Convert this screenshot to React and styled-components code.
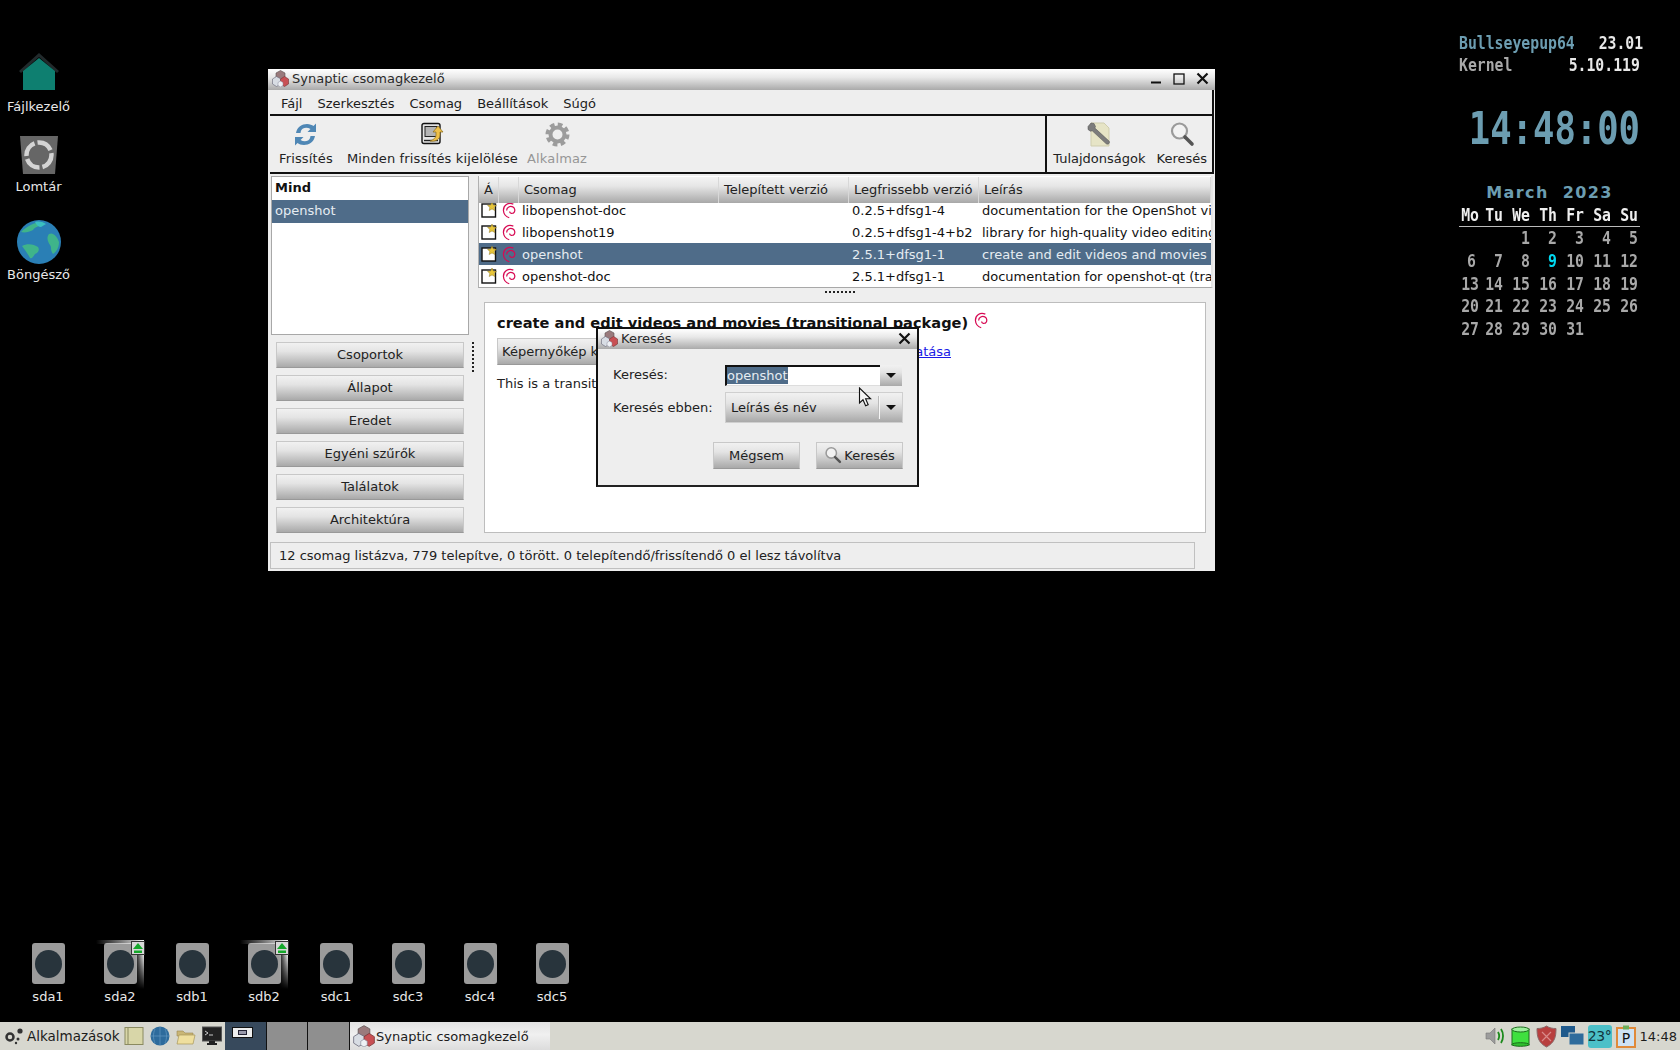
import React from "react";
import styled, { createGlobalStyle } from "styled-components";

const GlobalStyle = createGlobalStyle`
  html, body { margin: 0; padding: 0; background: #000; overflow: hidden; }
  body { font-family: "DejaVu Sans", sans-serif; font-size: 13px; color: #1c1c1c; }
  * { box-sizing: border-box; }
`;

const SELECT = "#4f6c89";
const BTN_GRAD = "linear-gradient(#f1f1f1 0%, #e4e4e4 35%, #a9a9a9 100%)";

const Page = styled.div`
  width: 1680px;
  height: 1050px;
  display: flex;
  flex-direction: column;
`;

const Desktop = styled.div`
  position: relative;
  flex: 1;
  background: #000;
`;

/* desktop icons */
const DeskIcon = styled.div`
  position: absolute;
  left: 0;
  top: ${(p) => p.$top}px;
  width: 77px;
  display: flex;
  flex-direction: column;
  align-items: center;
  color: #e8e8e8;
`;

const DeskLabel = styled.div`
  height: 16px;
  line-height: 16px;
  margin-top: ${(p) => p.$gap}px;
`;

const DriveRow = styled.div`
  position: absolute;
  left: 12px;
  top: 941px;
  display: flex;
`;

const Drive = styled.div`
  position: relative;
  width: 72px;
  height: 64px;
  display: flex;
  flex-direction: column;
  align-items: center;
  padding-top: 2px;
  color: #e8e8e8;
`;

const DriveBody = styled.div`
  width: 33px;
  height: 42px;
  border-radius: 3px;
  background: #9b9b9b;
  display: flex;
  align-items: center;
  justify-content: center;
`;

const DriveHole = styled.div`
  width: 27px;
  height: 28px;
  border-radius: 50%;
  background: #28343c;
`;

const DriveLabel = styled.div`
  margin-top: 5px;
  line-height: 16px;
`;

const MountGlow = styled.div`
  position: absolute;
  left: 12px;
  top: -1px;
  width: 48px;
  height: 49px;

  &::before {
    content: "";
    position: absolute;
    left: 0;
    top: 0;
    width: 100%;
    height: 4px;
    background: linear-gradient(to right, transparent, #e8e8e8);
  }

  &::after {
    content: "";
    position: absolute;
    right: 0;
    top: 0;
    width: 9px;
    height: 100%;
    background: linear-gradient(to right, transparent, #f0f0f0);
    mask-image: linear-gradient(#000 30%, transparent);
  }
`;

const EjectBadge = styled.div`
  position: absolute;
  left: 47px;
  top: 0;
  width: 14px;
  height: 14px;
  background: #d8d8d8;
  border: 1px solid #333;
  display: flex;
`;

/* conky */
const Conky = styled.div`
  position: absolute;
  left: 1459px;
  top: 32px;
  width: 181px;
  font-family: "DejaVu Sans Mono", monospace;
  font-weight: bold;
  font-size: 17px;
`;

const ConkyLine = styled.div`
  height: 22px;
  line-height: 22px;
  display: flex;
  justify-content: space-between;
`;

const ConkyKey = styled.span`
  color: ${(p) => p.$color};
  transform: scaleX(0.87);
  transform-origin: left;
`;

const ConkyValue = styled.span`
  color: #e8e8e8;
  transform: scaleX(0.87);
  transform-origin: right;
`;

const Clock = styled.div`
  margin-top: 31px;
  height: 44px;
  line-height: 44px;
  font-size: 45px;
  display: flex;
  justify-content: flex-end;
  color: #6c9db1;
  transform: scaleX(0.79);
  transform-origin: right;
  white-space: nowrap;
`;

const MonthTitle = styled.div`
  margin-top: 31px;
  height: 22px;
  line-height: 22px;
  text-align: center;
  font-family: "DejaVu Sans", sans-serif;
  font-size: 16px;
  letter-spacing: 1.4px;
  white-space: pre;
  color: #6c9db1;
`;

const CalGrid = styled.div`
  display: grid;
  grid-template-columns: 17px repeat(6, 27px);
  grid-auto-rows: 22.8px;
  line-height: 22px;
`;

const CalHead = styled.div`
  display: grid;
  grid-template-columns: 17px repeat(6, 27px);
  height: 23px;
  line-height: 22px;
  border-bottom: 1px solid #bbb;
`;

const CalCell = styled.div`
  text-align: right;
  white-space: nowrap;
  color: ${(p) => p.$color};
  transform: scaleX(0.87);
  transform-origin: right;
`;

/* main window */
const Window = styled.div`
  position: absolute;
  left: 268px;
  top: 69px;
  width: 947px;
  height: 502px;
  background: #eeeeee;
  display: flex;
  flex-direction: column;
`;

const TitleBar = styled.div`
  height: ${(p) => p.$h}px;
  flex: none;
  display: flex;
  align-items: center;
  background: linear-gradient(#ffffff, #e8e8e8 40%, #aaaaaa);
  padding-left: ${(p) => p.$pad}px;
  padding-bottom: 2px;
  gap: 3px;
  color: #2a2a2a;
  white-space: nowrap;
`;

const TitleText = styled.span`
  flex: 1;
`;

const WinControls = styled.div`
  display: flex;
  align-items: center;
  margin-right: ${(p) => p.$right}px;
  gap: 11px;
`;

const MenuBar = styled.div`
  height: 26px;
  flex: none;
  display: flex;
  align-items: center;
  gap: 15px;
  padding-left: 11px;
  padding-top: 2px;
  margin: 0 1px 0 2px;
  border-bottom: 2px solid #111;
  border-right: 2px solid #111;
`;

const Toolbar = styled.div`
  height: 58px;
  flex: none;
  display: flex;
  margin: 0 1px 0 2px;
  border-bottom: 2px solid #111;
  border-right: 2px solid #111;
`;

const ToolGroup = styled.div`
  display: flex;
  flex: ${(p) => (p.$grow ? 1 : "none")};
  padding-left: ${(p) => p.$pad}px;
  gap: ${(p) => (p.$grow ? 4 : 1)}px;
  letter-spacing: ${(p) => (p.$grow ? 0.15 : 0)}px;
  border-left: ${(p) => (p.$split ? "2px solid #111" : "none")};
`;

const ToolItem = styled.div`
  display: flex;
  flex-direction: column;
  align-items: center;
  padding: 5px 5px 0;
  margin-left: ${(p) => p.$shift || 0}px;
  color: ${(p) => (p.$off ? "#969696" : "#222")};
  white-space: nowrap;
`;

const ToolIcon = styled.div`
  height: 26px;
  display: flex;
  align-items: center;
  justify-content: center;
`;

const ToolText = styled.div`
  margin-top: 4px;
  line-height: 16px;
`;

const Panes = styled.div`
  flex: none;
  height: 364px;
  display: flex;
  padding: 2px 2px 0 3px;
`;

const LeftPane = styled.div`
  width: 198px;
  flex: none;
  display: flex;
  flex-direction: column;
`;

const FilterList = styled.div`
  height: 159px;
  flex: none;
  background: #fff;
  border: 1px solid #a8a8a8;
`;

const FilterItem = styled.div`
  height: ${(p) => p.$h}px;
  line-height: ${(p) => p.$h - 2}px;
  padding-left: 3px;
  font-weight: ${(p) => (p.$bold ? "bold" : "normal")};
  background: ${(p) => (p.$active ? SELECT : "transparent")};
  color: ${(p) => (p.$active ? "#e6ecf2" : "#111")};
`;

const FilterButtons = styled.div`
  display: flex;
  flex-direction: column;
  gap: 7px;
  margin: 7px 5px 0 5px;
`;

const GradButton = styled.div`
  height: ${(p) => p.$h || 26}px;
  width: ${(p) => (p.$w ? `${p.$w}px` : "auto")};
  display: flex;
  align-items: center;
  justify-content: center;
  gap: 2px;
  padding: 0 4px 1px;
  background: ${BTN_GRAD};
  border: 1px solid #c8c8c8;
  border-bottom-color: #999;
  color: #222;
  flex: none;
  white-space: nowrap;
`;

const VDivider = styled.div`
  width: 9px;
  flex: none;
  display: flex;
  justify-content: center;
  padding-top: 166px;
`;

const DotsV = styled.div`
  width: 2px;
  height: 32px;
  background: repeating-linear-gradient(#222 0 2px, transparent 2px 4px);
  margin-left: -1px;
`;

const RightPane = styled.div`
  flex: 1;
  min-width: 0;
  display: flex;
  flex-direction: column;
`;

const Table = styled.div`
  height: 112px;
  flex: none;
  background: #fff;
  border-left: 1px solid #b0b0b0;
  border-bottom: 1px solid #a8a8a8;
  border-right: 2px solid #e4e4e4;
  padding-top: 1px;
  overflow: hidden;
`;

const TableHead = styled.div`
  position: relative;
  z-index: 1;
  height: 26px;
  display: grid;
  grid-template-columns: 20px 20px 200px 130px 130px 1fr;
  background: #eee;
`;

const HeadCell = styled.div`
  background: linear-gradient(#f4f4f4, #e6e6e6 35%, #a8a8a8);
  border-right: 1px solid #d8d8d8;
  padding-left: 5px;
  line-height: 26px;
  color: #222;
  white-space: nowrap;
  overflow: hidden;
`;

const Row = styled.div`
  height: 22px;
  display: grid;
  grid-template-columns: 20px 20px 200px 130px 130px 1fr;
  align-items: center;
  margin-top: ${(p) => (p.$first ? -4 : 0)}px;
  background: ${(p) => (p.$active ? SELECT : "#fff")};
  color: ${(p) => (p.$active ? "#e6ecf2" : "#111")};
`;

const RowText = styled.div`
  padding-left: ${(p) => p.$pad}px;
  white-space: nowrap;
  overflow: hidden;
`;

const RowIcon = styled.div`
  display: flex;
  justify-content: center;
  padding-left: ${(p) => p.$nudge || 0}px;
`;

const HDivider = styled.div`
  height: 14px;
  flex: none;
  display: flex;
  justify-content: center;
  padding-top: 3px;
`;

const DotsH = styled.div`
  width: 32px;
  height: 2px;
  background: repeating-linear-gradient(to right, #222 0 2px, transparent 2px 4px);
  margin-right: 10px;
`;

const Details = styled.div`
  height: 231px;
  flex: none;
  margin: 0 7px 0 6px;
  background: #fff;
  border: 1px solid #bdbdbd;
  padding: 12px 12px;
  color: #222;
`;

const DetailTitle = styled.div`
  display: flex;
  align-items: flex-start;
  gap: 6px;
  height: 16px;
  font-weight: bold;
  font-size: 14.6px;
  line-height: 16px;
  color: #111;
  white-space: nowrap;
`;

const TitleSwirl = styled.div`
  margin-top: -3px;
`;

const LinkRow = styled.div`
  margin-top: 7px;
  display: flex;
  align-items: center;
  justify-content: space-between;
  width: 454px;
  height: 27px;
`;

const DetailLink = styled.a`
  color: #1a1ae6;
  text-decoration: underline;
  white-space: nowrap;
`;

const DetailText = styled.div`
  margin-top: 10px;
  line-height: 18px;
`;

const StatusBar = styled.div`
  flex: none;
  margin: 4px 0 0 2px;
  height: 27px;
  width: 925px;
  border: 1px solid #c0c0c0;
  line-height: 25px;
  padding-left: 8px;
  color: #222;
  white-space: nowrap;
`;

/* search dialog */
const Dialog = styled.div`
  position: absolute;
  left: 596px;
  top: 327px;
  width: 323px;
  height: 160px;
  background: #eeeeee;
  border: 2px solid #111;
  border-bottom-color: #222;
  display: flex;
  flex-direction: column;
`;

const DialogBody = styled.div`
  flex: 1;
  padding: 16px 14px 0 15px;
  display: flex;
  flex-direction: column;
`;

const FormRow = styled.div`
  display: flex;
  align-items: center;
  height: ${(p) => p.$h}px;
  margin-bottom: 6px;
`;

const FormLabel = styled.div`
  width: 112px;
  flex: none;
  padding-bottom: ${(p) => (p.$up ? 2 : 0)}px;
  white-space: nowrap;
  color: #222;
`;

const Entry = styled.div`
  width: 155px;
  height: 21px;
  flex: none;
  background: #fff;
  border-top: 2px solid #111;
  border-left: 2px solid #111;
  border-bottom: 1px solid #ddd;
  line-height: 17px;
`;

const EntrySelection = styled.span`
  display: inline-block;
  background: ${SELECT};
  color: #e6ecf2;
`;

const ArrowButton = styled.div`
  width: 22px;
  height: 21px;
  flex: none;
  background: ${BTN_GRAD};
  display: flex;
  align-items: center;
  justify-content: center;
`;

const Arrow = styled.div`
  width: 0;
  height: 0;
  border-left: 5px solid transparent;
  border-right: 5px solid transparent;
  border-top: 5px solid #111;
`;

const ComboBox = styled.div`
  width: 178px;
  height: 31px;
  flex: none;
  background: ${BTN_GRAD};
  border: 1px solid #cfcfcf;
  display: flex;
  align-items: center;
  padding: 0 6px 0 5px;
`;

const ComboText = styled.div`
  flex: 1;
`;

const ComboSep = styled.div`
  width: 2px;
  height: 23px;
  background: #f6f6f6;
  border-left: 1px solid #bbb;
  margin-right: 6px;
`;

const DialogActions = styled.div`
  display: flex;
  justify-content: flex-end;
  gap: 16px;
  margin-top: 13px;
`;

const Pointer = styled.svg`
  position: absolute;
  left: 858px;
  top: 387px;
`;

/* panel */
const Taskbar = styled.div`
  height: 28px;
  flex: none;
  background: #d7d7cf;
  display: flex;
  align-items: center;
  white-space: nowrap;
  color: #1c1c1c;
`;

const StartButton = styled.div`
  display: flex;
  align-items: center;
  gap: 2px;
  padding-left: 4px;
  width: 122px;
  font-size: 13.5px;
`;

const Launchers = styled.div`
  display: flex;
  align-items: center;
  gap: 6px;
  padding-left: 2px;
  width: 103px;
`;

const PagerCell = styled.div`
  width: ${(p) => p.$w}px;
  height: 28px;
  flex: none;
  background: ${(p) => p.$bg};
  border-right: 1px solid #111;
  display: flex;
  padding: 5px 0 0 7px;
`;

const MiniWindow = styled.div`
  width: 21px;
  height: 11px;
  background: #eee;
  border: 1px solid #111;
  display: flex;
  align-items: center;
  justify-content: center;
`;

const MiniInner = styled.div`
  width: 9px;
  height: 5px;
  border: 1px solid #223;
  background: #99a;
`;

const TaskButton = styled.div`
  width: 200px;
  height: 28px;
  flex: none;
  display: flex;
  align-items: center;
  gap: 1px;
  padding-left: 3px;
  background: linear-gradient(#e2e2e2, #f0f0f0 45%, #dcdcdc);
`;

const Tray = styled.div`
  margin-left: auto;
  display: flex;
  align-items: center;
  gap: 4px;
  padding-right: 3px;
`;

const Weather = styled.div`
  width: 24px;
  height: 23px;
  border-radius: 3px;
  background: #4cc0c8;
  color: #12343c;
  font-size: 14px;
  line-height: 23px;
  text-align: center;
  letter-spacing: -0.5px;
`;

/* drawings */
const Swirl = ({ size = 16 }) => (
  <svg width={size * 0.85} height={size} viewBox="0 0 14 16" fill="none" stroke="#d70a53" strokeWidth="1.2">
    <path d="M11 1.800C6 -.5 1.200 3 1.400 8c.2 3.400 2.400 6 5.600 7" />
    <path d="M4.500 8C4.500 4.500 8 3.500 10.500 4.500c2.500 1.200 2.500 5 .5 6-1.500 .8-3.500 .2-3.600-1.500" />
  </svg>
);

const PackageMark = () => (
  <svg width="17" height="16" viewBox="0 0 17 16">
    <rect x="1" y="2" width="13.500" height="13" fill="#fff" stroke="#111" strokeWidth="1.400" />
    <polygon points="11,0 12.300,3 15.500,3.300 13.100,5.400 13.800,8.500 11,6.900 8.200,8.500 8.900,5.400 6.500,3.300 9.700,3" fill="#e8c63a" stroke="#8a7420" strokeWidth=".5" />
  </svg>
);

const SynapticIcon = ({ size = 17 }) => (
  <svg width={size} height={size} viewBox="0 0 17 17">
    <polygon points="8.500,0.500 13,3 13,7.500 8.500,10 4,7.500 4,3" fill="#9a7a7c" stroke="#5a5050" strokeWidth=".6" />
    <polygon points="4.500,6.500 9,9 9,14 4.500,16.500 0.500,14 0.500,9" fill="#d8dde4" stroke="#667" strokeWidth=".6" />
    <polygon points="12.500,6.500 16.500,9 16.500,14 12.500,16.500 8.500,14 8.500,9" fill="#c85054" stroke="#733" strokeWidth=".6" />
    <polygon points="8.500,11 11,12.500 11,15.500 8.500,17 6,15.500 6,12.500" fill="#eef1f5" stroke="#889" strokeWidth=".5" />
  </svg>
);

const RefreshIcon = () => (
  <svg width="25" height="25" viewBox="0 0 25 25" fill="#4f87b5">
    <path d="M3 11C4 5 9 2 14 2c3 0 5 1 6.500 2L23 1.500V10h-8.500l3-3C15 5.500 12 5.500 10 6.500 8.500 7.200 7.800 9 7.500 11z" />
    <path d="M22 14c-1 6-6 9-11 9-3 0-5-1-6.500-2L2 23.500V15h8.500l-3 3c2.500 1.500 5.500 1.500 7.500.5 1.500-.7 2.200-2.500 2.500-4.500z" />
  </svg>
);

const SelectAllIcon = () => (
  <svg width="24" height="24" viewBox="0 0 24 24">
    <rect x="2" y="1.500" width="18" height="20" rx="2" fill="#e4e4e4" stroke="#111" strokeWidth="1.400" />
    <rect x="5" y="4.500" width="12" height="10" fill="#b4b4b4" stroke="#222" />
    <path d="M4 18.500h14" stroke="#222" strokeWidth="1.400" />
    <path d="M18 4l5 6h-3v3c0 4-4 7-10 6 3-1 6-3 6-6v-3h-3z" fill="#eec04a" stroke="#8a6a18" strokeWidth=".7" />
  </svg>
);

const GearIcon = () => (
  <svg width="25" height="25" viewBox="0 0 25 25" fill="none" stroke="#9c9c9c">
    <circle cx="12.500" cy="12.500" r="7" strokeWidth="4" />
    <circle cx="12.500" cy="12.500" r="10" strokeWidth="4" strokeDasharray="4.600 3.250" />
  </svg>
);

const WrenchIcon = () => (
  <svg width="26" height="26" viewBox="0 0 26 26">
    <path d="M5 2h13l5 5v18H5z" fill="#e6e4c6" stroke="#cfcdae" />
    <path d="M2 5.500L5 2l3 .5 1.500 3-.6 1.600L23 20c.9 1 .5 2.600-.8 3.100-.9.3-1.700 0-2.200-.5L6.200 9.800l-1.800.4L2 8.500z" fill="#7c7c7c" stroke="#4c4c4c" strokeWidth=".5" />
  </svg>
);

const SearchIcon = ({ size = 26 }) => (
  <svg width={size} height={size} viewBox="0 0 26 26" fill="none">
    <circle cx="10.500" cy="10" r="7.500" fill="#f2f2f2" stroke="#9a9a9a" strokeWidth="2.200" />
    <path d="M16 16l7 7" stroke="#555" strokeWidth="3.600" strokeLinecap="round" />
  </svg>
);

const HomeIcon = () => (
  <svg width="44" height="40" viewBox="0 0 44 40">
    <path d="M22 1L2 19l2 2L22 5l18 16 2-2z" fill="#222a2c" />
    <path d="M6 19L22 6l16 13v19H6z" fill="#0e7f70" />
  </svg>
);

const TrashIcon = () => (
  <svg width="40" height="40" viewBox="0 0 40 40" fill="none">
    <path d="M1 1h38l-3 38H4z" fill="#666" />
    <circle cx="20" cy="20" r="12.500" stroke="#d4d4d4" strokeWidth="4.500" strokeDasharray="16 3" />
  </svg>
);

const GlobeIcon = () => (
  <svg width="44" height="44" viewBox="0 0 44 44">
    <circle cx="22" cy="22" r="22" fill="#2a7fb5" />
    <path d="M4 12c6-6 14-10 22-10-2 5-8 4-10 8-4 2-8 3-12 2zM32 14c4-2 8 2 10 8 0 6-3 10-6 12-3-4-1-6-3-9-2-3-4-7-1-11zM5 26c5-3 12-2 16 1 2 3 0 6-3 7-2 3-3 5-5 4-2-4-5-8-8-12z" fill="#3fb48a" />
    <path d="M18 2c4-1 8 0 11 2l-5 3c-2 0-5-2-6-5z" fill="#3ac0c0" />
  </svg>
);

const EjectIcon = () => (
  <svg width="12" height="12" viewBox="0 0 12 12">
    <path d="M6 1l5 6H1z" fill="#14a82a" />
    <rect x="2" y="8.500" width="8" height="2.500" fill="#14a82a" />
  </svg>
);

const AppsIcon = () => (
  <svg width="21" height="20" viewBox="0 0 21 20">
    <circle cx="6" cy="11" r="3.500" fill="none" stroke="#333" strokeWidth="2.500" />
    <circle cx="16" cy="5" r="2.600" fill="#333" />
    <circle cx="14" cy="13" r="1.500" fill="#333" />
    <circle cx="12" cy="17" r="1.200" fill="#333" />
  </svg>
);

const NotebookIcon = () => (
  <svg width="20" height="20" viewBox="0 0 20 20">
    <rect x="1" y="1.500" width="18" height="17" fill="#d8d6a8" stroke="#8a8a60" />
    <path d="M4 2v16" stroke="#8a8a60" />
  </svg>
);

const BlueGlobe = () => (
  <svg width="20" height="20" viewBox="0 0 20 20">
    <circle cx="10" cy="10" r="9.500" fill="#2d6b9c" />
    <path d="M1 10h18M10 1v18M5 3c-2 4-2 10 0 14M15 3c2 4 2 10 0 14" stroke="#5c93bd" fill="none" strokeWidth=".8" />
  </svg>
);

const FolderIcon = () => (
  <svg width="20" height="20" viewBox="0 0 20 20">
    <path d="M1 5h6l2 2h8v3H1z" fill="#c9b676" stroke="#9a8850" strokeWidth=".6" />
    <path d="M1 18l2-9h16l-2 9z" fill="#efdf9e" stroke="#a8965a" strokeWidth=".7" />
  </svg>
);

const TerminalIcon = () => (
  <svg width="20" height="20" viewBox="0 0 20 20">
    <rect x="0.500" y="1" width="19" height="14" fill="#222" stroke="#555" />
    <path d="M3 5l3 2-3 2M7 9h4" stroke="#ddd" fill="none" strokeWidth=".9" />
    <path d="M7 15h6v2h2v2H5v-2h2z" fill="#222" />
  </svg>
);

const SpeakerIcon = () => (
  <svg width="22" height="20" viewBox="0 0 22 20" fill="none">
    <path d="M1 7h4l5-5v16l-5-5H1z" fill="#9c9c9c" stroke="#777" strokeWidth=".6" />
    <path d="M13 6c1.500 2.500 1.500 5.500 0 8M16 3c2.700 4 2.700 10 0 14" stroke="#1d8a1d" strokeWidth="1.800" />
  </svg>
);

const DiskIcon = () => (
  <svg width="21" height="21" viewBox="0 0 21 21">
    <rect x="1" y="3" width="17" height="16" fill="#3fe03f" stroke="#1c6c1c" />
    <ellipse cx="9.500" cy="3.500" rx="8.500" ry="2.500" fill="#9cf09c" stroke="#1c6c1c" />
    <ellipse cx="9.500" cy="18.500" rx="8.500" ry="1.800" fill="#2ec02e" stroke="#1c6c1c" />
  </svg>
);

const ShieldIcon = () => (
  <svg width="21" height="23" viewBox="0 0 21 23">
    <path d="M10.500 1c3 2 6 2.500 9.500 2.500 0 8-1 14-9.500 18.500C2 17.500 1 11.500 1 3.500 4.500 3.500 7.500 3 10.500 1z" fill="#b8403f" stroke="#8a6a6a" />
    <path d="M6 7l9 9M15 7l-9 9" stroke="#d98a8a" strokeWidth="1.200" />
  </svg>
);

const DesktopsIcon = () => (
  <svg width="23" height="20" viewBox="0 0 23 20">
    <rect x="0" y="0" width="14" height="11" fill="#1f5a8c" />
    <rect x="8" y="7" width="15" height="12" fill="#2f6c9c" stroke="#d7d7cf" />
  </svg>
);

const ClipIcon = () => (
  <svg width="20" height="23" viewBox="0 0 20 23">
    <rect x="1" y="3" width="18" height="19" fill="#cfe2f4" stroke="#e08a3a" strokeWidth="2" />
    <rect x="7" y="0.500" width="6" height="4" fill="#6cae5a" />
    <text x="10" y="18" textAnchor="middle" fontFamily="DejaVu Sans" fontSize="14" fill="#111">P</text>
  </svg>
);

const MinimizeGlyph = () => (
  <svg width="11" height="12" viewBox="0 0 11 12"><rect x="0" y="8.500" width="10" height="2" fill="#111" /></svg>
);

const MaximizeGlyph = () => (
  <svg width="12" height="12" viewBox="0 0 12 12" fill="none"><rect x="1" y="1" width="10" height="10" stroke="#111" strokeWidth="1.300" /></svg>
);

const CloseGlyph = () => (
  <svg width="13" height="13" viewBox="0 0 13 13"><path d="M1.500 1.500l10 10M11.500 1.500l-10 10" stroke="#111" strokeWidth="2.200" /></svg>
);

const MousePointer = () => (
  <Pointer width="14" height="22" viewBox="0 0 14 22">
    <path d="M1.500 1v15l3.500-3.200 2.600 6 2.600-1.100-2.600-5.900h5z" fill="#f4f4f4" stroke="#111" strokeWidth="1.100" />
  </Pointer>
);

const menus = ["Fájl", "Szerkesztés", "Csomag", "Beállítások", "Súgó"];
const filters = ["Csoportok", "Állapot", "Eredet", "Egyéni szűrők", "Találatok", "Architektúra"];
const columns = ["Á", "", "Csomag", "Telepített verzió", "Legfrissebb verzió", "Leírás"];
const packages = [
  { name: "libopenshot-doc", version: "0.2.5+dfsg1-4", text: "documentation for the OpenShot video library" },
  { name: "libopenshot19", version: "0.2.5+dfsg1-4+b2", text: "library for high-quality video editing" },
  { name: "openshot", version: "2.5.1+dfsg1-1", text: "create and edit videos and movies (transitional)", active: true },
  { name: "openshot-doc", version: "2.5.1+dfsg1-1", text: "documentation for openshot-qt (transitional)" },
];
const drives = [
  { name: "sda1" },
  { name: "sda2", mounted: true },
  { name: "sdb1" },
  { name: "sdb2", mounted: true },
  { name: "sdc1" },
  { name: "sdc3" },
  { name: "sdc4" },
  { name: "sdc5" },
];
const weekDays = ["Mo", "Tu", "We", "Th", "Fr", "Sa", "Su"];
const monthDays = ["", "", "1", "2", "3", "4", "5"];
for (let d = 6; d <= 31; d++) monthDays.push(String(d));

const App = () => (
  <Page>
    <GlobalStyle />
    <Desktop>
      <DeskIcon $top={52}>
        <HomeIcon />
        <DeskLabel $gap={7}>Fájlkezelő</DeskLabel>
      </DeskIcon>
      <DeskIcon $top={135}>
        <TrashIcon />
        <DeskLabel $gap={4}>Lomtár</DeskLabel>
      </DeskIcon>
      <DeskIcon $top={220}>
        <GlobeIcon />
        <DeskLabel $gap={3}>Böngésző</DeskLabel>
      </DeskIcon>

      <DriveRow>
        {drives.map((d) => (
          <Drive key={d.name}>
            {d.mounted && <MountGlow />}
            <DriveBody><DriveHole /></DriveBody>
            <DriveLabel>{d.name}</DriveLabel>
            {d.mounted && <EjectBadge><EjectIcon /></EjectBadge>}
          </Drive>
        ))}
      </DriveRow>

      <Conky>
        <ConkyLine>
          <ConkyKey $color="#6c9db1">Bullseyepup64</ConkyKey>
          <ConkyValue>23.01</ConkyValue>
        </ConkyLine>
        <ConkyLine>
          <ConkyKey $color="#a8a8a8">Kernel</ConkyKey>
          <ConkyValue>5.10.119</ConkyValue>
        </ConkyLine>
        <Clock>14:48:00</Clock>
        <MonthTitle>March  2023</MonthTitle>
        <CalHead>
          {weekDays.map((w) => <CalCell key={w} $color="#eeeeee">{w}</CalCell>)}
        </CalHead>
        <CalGrid>
          {monthDays.map((d, i) => (
            <CalCell key={i} $color={d === "9" ? "#00d8f0" : "#a8a8a8"}>{d}</CalCell>
          ))}
        </CalGrid>
      </Conky>

      <Window>
        <TitleBar $h={21} $pad={4}>
          <SynapticIcon />
          <TitleText>Synaptic csomagkezelő</TitleText>
          <WinControls $right={6}>
            <MinimizeGlyph />
            <MaximizeGlyph />
            <CloseGlyph />
          </WinControls>
        </TitleBar>
        <MenuBar>
          {menus.map((m) => <span key={m}>{m}</span>)}
        </MenuBar>
        <Toolbar>
          <ToolGroup $grow $pad={4}>
            <ToolItem>
              <ToolIcon><RefreshIcon /></ToolIcon>
              <ToolText>Frissítés</ToolText>
            </ToolItem>
            <ToolItem>
              <ToolIcon><SelectAllIcon /></ToolIcon>
              <ToolText>Minden frissítés kijelölése</ToolText>
            </ToolItem>
            <ToolItem $off $shift={-5}>
              <ToolIcon><GearIcon /></ToolIcon>
              <ToolText>Alkalmaz</ToolText>
            </ToolItem>
          </ToolGroup>
          <ToolGroup $split $pad={1}>
            <ToolItem>
              <ToolIcon><WrenchIcon /></ToolIcon>
              <ToolText>Tulajdonságok</ToolText>
            </ToolItem>
            <ToolItem>
              <ToolIcon><SearchIcon /></ToolIcon>
              <ToolText>Keresés</ToolText>
            </ToolItem>
          </ToolGroup>
        </Toolbar>
        <Panes>
          <LeftPane>
            <FilterList>
              <FilterItem $h={23} $bold>Mind</FilterItem>
              <FilterItem $h={23} $active>openshot</FilterItem>
            </FilterList>
            <FilterButtons>
              {filters.map((f) => <GradButton key={f}>{f}</GradButton>)}
            </FilterButtons>
          </LeftPane>
          <VDivider><DotsV /></VDivider>
          <RightPane>
            <Table>
              <TableHead>
                {columns.map((c, i) => <HeadCell key={i}>{c}</HeadCell>)}
              </TableHead>
              {packages.map((p, i) => (
                <Row key={p.name} $first={i === 0} $active={p.active}>
                  <RowIcon $nudge={1}><PackageMark /></RowIcon>
                  <RowIcon><Swirl size={17} /></RowIcon>
                  <RowText $pad={3}>{p.name}</RowText>
                  <RowText $pad={3}></RowText>
                  <RowText $pad={3}>{p.version}</RowText>
                  <RowText $pad={3}>{p.text}</RowText>
                </Row>
              ))}
            </Table>
            <HDivider><DotsH /></HDivider>
            <Details>
              <DetailTitle>
                create and edit videos and movies (transitional package)
                <TitleSwirl><Swirl size={17} /></TitleSwirl>
              </DetailTitle>
              <LinkRow>
                <GradButton $h={27}>Képernyőkép készítése</GradButton>
                <DetailLink>Csomag honlapjának látogatása</DetailLink>
              </LinkRow>
              <DetailText>This is a transitional package.</DetailText>
            </Details>
          </RightPane>
        </Panes>
        <StatusBar>12 csomag listázva, 779 telepítve, 0 törött. 0 telepítendő/frissítendő 0 el lesz távolítva</StatusBar>
      </Window>

      <Dialog>
        <TitleBar $h={20} $pad={3}>
          <SynapticIcon />
          <TitleText>Keresés</TitleText>
          <WinControls $right={6}><CloseGlyph /></WinControls>
        </TitleBar>
        <DialogBody>
          <FormRow $h={21}>
            <FormLabel $up>Keresés:</FormLabel>
            <Entry><EntrySelection>openshot</EntrySelection></Entry>
            <ArrowButton><Arrow /></ArrowButton>
          </FormRow>
          <FormRow $h={31}>
            <FormLabel>Keresés ebben:</FormLabel>
            <ComboBox>
              <ComboText>Leírás és név</ComboText>
              <ComboSep />
              <Arrow />
            </ComboBox>
          </FormRow>
          <DialogActions>
            <GradButton $w={87} $h={27}>Mégsem</GradButton>
            <GradButton $w={87} $h={27}><SearchIcon size={18} />Keresés</GradButton>
          </DialogActions>
        </DialogBody>
      </Dialog>

      <MousePointer />
    </Desktop>

    <Taskbar>
      <StartButton><AppsIcon />Alkalmazások</StartButton>
      <Launchers>
        <NotebookIcon />
        <BlueGlobe />
        <FolderIcon />
        <TerminalIcon />
      </Launchers>
      <PagerCell $w={42} $bg="#37495c"><MiniWindow><MiniInner /></MiniWindow></PagerCell>
      <PagerCell $w={41} $bg="#8f8f8f" />
      <PagerCell $w={42} $bg="#8f8f8f" />
      <TaskButton>
        <SynapticIcon size={22} />
        Synaptic csomagkezelő
      </TaskButton>
      <Tray>
        <SpeakerIcon />
        <DiskIcon />
        <ShieldIcon />
        <DesktopsIcon />
        <Weather>23°</Weather>
        <ClipIcon />
        <div>14:48</div>
      </Tray>
    </Taskbar>
  </Page>
);

export default App;
